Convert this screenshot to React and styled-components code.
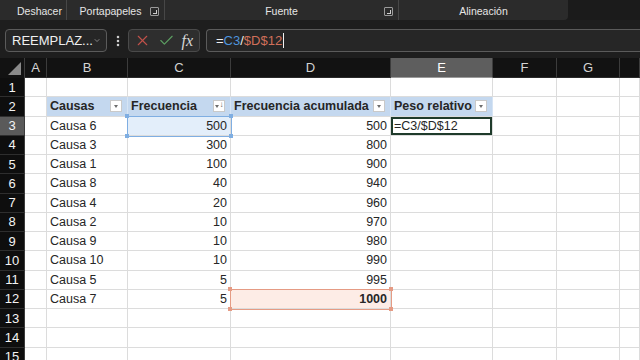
import React from 'react';
import styled, { createGlobalStyle } from 'styled-components';
import { ChevronDown, X, Check, EllipsisVertical } from 'lucide-react';

const GlobalStyle = createGlobalStyle`
  html, body {
    margin: 0;
    padding: 0;
    background: #1e1e1e;
    overflow: hidden;
  }
  body {
    font-family: "Liberation Sans", Arial, sans-serif;
  }
`;

const Page = styled.div`
  width: 640px;
  height: 360px;
  overflow: hidden;
  background: #1e1e1e;
  display: flex;
  flex-direction: column;
`;

/* ---------- ribbon ---------- */

const Ribbon = styled.div`
  height: 20px;
  flex-shrink: 0;
  display: flex;
  background: #1b1b1b;
`;

const RibbonBody = styled.div`
  width: 568px;
  display: flex;
  background: #2b2b2b;
  border-bottom-right-radius: 4px;
`;

const Group = styled.div`
  width: ${({ $w }) => $w}px;
  display: flex;
  align-items: center;
  justify-content: ${({ $left }) => ($left ? 'flex-start' : 'center')};
  padding-left: ${({ $left }) => ($left ? '17px' : '0')};
  padding-top: 2px;
  box-sizing: border-box;
  border-right: ${({ $last }) => ($last ? 'none' : '1px solid #474747')};
  position: relative;
  color: #e6e6e6;
  font-size: 10.5px;
`;

const Launcher = styled.span`
  position: absolute;
  right: 5px;
  top: 7px;
  width: 7px;
  height: 7px;
  border: 1px solid #9a9a9a;
  border-radius: 1px;
  &::after {
    content: '';
    position: absolute;
    right: 1px;
    bottom: 1px;
    width: 3px;
    height: 3px;
    border-right: 1px solid #cfcfcf;
    border-bottom: 1px solid #cfcfcf;
  }
`;

/* ---------- formula bar ---------- */

const FormulaRow = styled.div`
  height: 38px;
  flex-shrink: 0;
  box-sizing: border-box;
  padding: 9px 0 6px 5px;
  display: flex;
  align-items: stretch;
  background: #1e1e1e;
`;

const NameBox = styled.div`
  width: 102px;
  box-sizing: border-box;
  border: 1px solid #5b5b5b;
  border-radius: 4px;
  background: #262626;
  color: #f0f0f0;
  font-size: 13px;
  display: flex;
  align-items: center;
  justify-content: space-between;
  padding: 0 5px 0 6px;
`;

const Dots = styled.div`
  width: 21px;
  display: flex;
  align-items: center;
  justify-content: center;
  color: #cfcfcf;
`;

const ButtonGroup = styled.div`
  width: 72px;
  box-sizing: border-box;
  border: 1px solid #4a4a4a;
  border-radius: 4px;
  background: #2e2e2e;
  display: flex;
  align-items: center;
  justify-content: space-between;
  padding: 0 6px 0 5px;
  margin-right: 6px;
`;

const Fx = styled.span`
  font-family: "Liberation Serif", "Times New Roman", serif;
  font-style: italic;
  font-size: 16px;
  color: #d8d8d8;
`;

const FormulaBox = styled.div`
  flex: 1;
  box-sizing: border-box;
  border: 1px solid #5b5b5b;
  border-right: none;
  border-radius: 4px 0 0 4px;
  background: #262626;
  display: flex;
  align-items: center;
  padding-left: 9px;
  font-size: 13px;
  color: #f0f0f0;
`;

const Ref = styled.span`
  color: ${({ $c }) => $c};
`;

const Caret = styled.span`
  display: inline-block;
  width: 1px;
  height: 15px;
  background: #f0f0f0;
  margin-left: 1px;
`;

/* ---------- sheet ---------- */

const COLS = '25px 22px 81px 103px 160px 102px 64px 63px 1fr';

const Sheet = styled.div`
  flex: 1;
  min-height: 0;
  background: #ffffff;
`;

const HeadRow = styled.div`
  display: grid;
  grid-template-columns: ${COLS};
  height: 20px;
  background: #121212;
`;

const ColHead = styled.div`
  display: flex;
  align-items: center;
  justify-content: center;
  font-size: 13px;
  color: ${({ $sel }) => ($sel ? '#ffffff' : '#d4d4d4')};
  background: ${({ $sel }) => ($sel ? '#5e5e5e' : '#121212')};
  border-right: 1px solid #3c3c3c;
  border-bottom: 1px solid ${({ $sel }) => ($sel ? '#9a9a9a' : '#2a2a2a')};
`;

const Corner = styled.div`
  position: relative;
  background: #121212;
  border-right: 1px solid #3c3c3c;
  &::after {
    content: '';
    position: absolute;
    right: 3px;
    bottom: 3px;
    border-style: solid;
    border-width: 0 0 13px 13px;
    border-color: transparent transparent #8a8a8a transparent;
  }
`;

const Row = styled.div`
  display: grid;
  grid-template-columns: ${COLS};
  height: 19.25px;
`;

const RowHead = styled.div`
  display: flex;
  align-items: center;
  justify-content: center;
  font-size: 13px;
  color: #f4f4f4;
  background: ${({ $sel }) => ($sel ? '#5a5a5a' : '#0e0e0e')};
  border-bottom: 1px solid #2e2e2e;
  border-right: 1px solid #3c3c3c;
`;

const fills = {
  head: '#c4d8ef',
  blue: '#e3eefa',
  red: '#fdece6',
};

const rings = {
  blue: '#7faee2',
  red: '#e59b84',
  active: '#1f3b2b',
};

const Cell = styled.div`
  position: relative;
  display: flex;
  align-items: center;
  justify-content: ${({ $right }) => ($right ? 'flex-end' : 'space-between')};
  padding: 0 3px;
  box-sizing: border-box;
  font-size: 12.5px;
  font-weight: ${({ $bold }) => ($bold ? 700 : 400)};
  color: #262626;
  white-space: nowrap;
  background: ${({ $fill }) => ($fill ? fills[$fill] : '#ffffff')};
  border-right: 1px solid ${({ $fill }) => ($fill === 'head' ? '#d6e4f4' : '#dcdcdc')};
  border-bottom: 1px solid #dcdcdc;
  box-shadow: ${({ $ring }) =>
    $ring === 'active'
      ? `inset 0 0 0 2px ${rings.active}`
      : $ring
      ? `0 0 0 1px ${rings[$ring]}`
      : 'none'};
  z-index: ${({ $ring }) => ($ring ? 2 : 0)};
`;

const Handle = styled.span`
  position: absolute;
  width: 4px;
  height: 4px;
  background: ${({ $c }) => $c};
  ${({ $v }) => ($v === 'top' ? 'top: -3px;' : 'bottom: -3px;')}
  ${({ $h }) => ($h === 'left' ? 'left: -3px;' : 'right: -3px;')}
`;

const FilterButton = styled.span`
  width: 12px;
  height: 12px;
  box-sizing: border-box;
  background: #ffffff;
  border: 1px solid #c9c9c9;
  display: flex;
  align-items: center;
  justify-content: center;
  gap: 1px;
  flex-shrink: 0;
  margin-right: 2px;
  &::before {
    content: '';
    border-style: solid;
    border-width: 3px 2.5px 0 2.5px;
    border-color: #6d6d6d transparent transparent transparent;
  }
`;

const SortArrow = styled.span`
  font-size: 8px;
  line-height: 1;
  color: #555;
  margin-top: -2px;
`;

function Corners({ color }) {
  return (
    <>
      <Handle $c={color} $v="top" $h="left" />
      <Handle $c={color} $v="top" $h="right" />
      <Handle $c={color} $v="bottom" $h="left" />
      <Handle $c={color} $v="bottom" $h="right" />
    </>
  );
}

const data = [
  ['Causa 6', 500, 500],
  ['Causa 3', 300, 800],
  ['Causa 1', 100, 900],
  ['Causa 8', 40, 940],
  ['Causa 4', 20, 960],
  ['Causa 2', 10, 970],
  ['Causa 9', 10, 980],
  ['Causa 10', 10, 990],
  ['Causa 5', 5, 995],
  ['Causa 7', 5, 1000],
];

const letters = ['A', 'B', 'C', 'D', 'E', 'F', 'G', ''];

function Blank({ n }) {
  return Array.from({ length: n }, (_, i) => <Cell key={i} />);
}

export default function App() {
  return (
    <Page>
      <GlobalStyle />
      <Ribbon>
        <RibbonBody>
          <Group $w={67} $left>Deshacer</Group>
          <Group $w={98}>
            <span style={{ marginRight: 10 }}>Portapapeles</span>
            <Launcher />
          </Group>
          <Group $w={234}>
            Fuente
            <Launcher />
          </Group>
          <Group $w={169} $last>Alineación</Group>
        </RibbonBody>
      </Ribbon>

      <FormulaRow>
        <NameBox>
          REEMPLAZ...
          <ChevronDown size={13} color="#d0d0d0" strokeWidth={1.6} />
        </NameBox>
        <Dots>
          <EllipsisVertical size={14} strokeWidth={2.4} />
        </Dots>
        <ButtonGroup>
          <X size={17} color="#c2514a" strokeWidth={1.6} />
          <Check size={17} color="#5c9e62" strokeWidth={1.6} />
          <Fx>fx</Fx>
        </ButtonGroup>
        <FormulaBox>
          =<Ref $c="#4d93dc">C3</Ref>/<Ref $c="#d0705a">$D$12</Ref>
          <Caret />
        </FormulaBox>
      </FormulaRow>

      <Sheet>
        <HeadRow>
          <Corner />
          {letters.map((l, i) => (
            <ColHead key={i} $sel={l === 'E'}>{l}</ColHead>
          ))}
        </HeadRow>

        <Row>
          <RowHead>1</RowHead>
          <Blank n={8} />
        </Row>

        <Row>
          <RowHead>2</RowHead>
          <Cell />
          <Cell $fill="head" $bold>
            Causas
            <FilterButton />
          </Cell>
          <Cell $fill="head" $bold>
            Frecuencia
            <FilterButton>
              <SortArrow>↓</SortArrow>
            </FilterButton>
          </Cell>
          <Cell $fill="head" $bold>
            Frecuencia acumulada
            <FilterButton />
          </Cell>
          <Cell $fill="head" $bold>
            Peso relativo
            <FilterButton />
          </Cell>
          <Blank n={3} />
        </Row>

        {data.map(([name, freq, acc], i) => {
          const r = i + 3;
          const first = i === 0;
          const last = i === data.length - 1;
          return (
            <Row key={r}>
              <RowHead $sel={first}>{r}</RowHead>
              <Cell />
              <Cell>{name}</Cell>
              <Cell $right $fill={first ? 'blue' : undefined} $ring={first ? 'blue' : undefined}>
                {freq}
                {first && <Corners color="#7faee2" />}
              </Cell>
              <Cell $right $bold={last} $fill={last ? 'red' : undefined} $ring={last ? 'red' : undefined}>
                {acc}
                {last && <Corners color="#e59b84" />}
              </Cell>
              <Cell $ring={first ? 'active' : undefined}>
                {first ? '=C3/$D$12' : ''}
              </Cell>
              <Blank n={3} />
            </Row>
          );
        })}

        {[13, 14, 15].map((r) => (
          <Row key={r}>
            <RowHead>{r}</RowHead>
            <Blank n={8} />
          </Row>
        ))}
      </Sheet>
    </Page>
  );
}
